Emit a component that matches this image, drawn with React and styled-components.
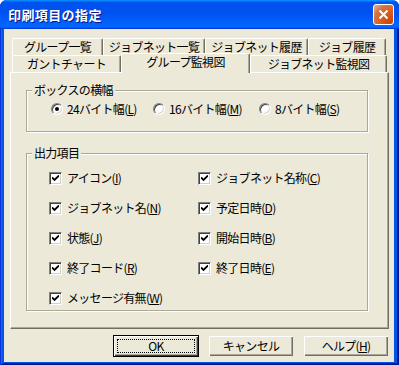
import styled, { createGlobalStyle } from "styled-components";

const Global = createGlobalStyle`
  html, body { margin: 0; padding: 0; background: #fff; }
  #root { width: 399px; height: 365px; }
`;

const Frame = styled.div`
  width: 399px;
  height: 365px;
  box-sizing: border-box;
  display: flex;
  flex-direction: column;
  background: #0054e3;
  border-radius: 7px 7px 0 0;
  box-shadow: inset 1px 0 #0831d9, inset -1px -1px #00138c, inset 2px 0 #166aee, inset -2px -2px #001ea0;
  overflow: hidden;
  font-family: "Noto Sans CJK JP", "Noto Sans", sans-serif;
  font-size: 12px;
  line-height: 14px;
  letter-spacing: -0.7px;
  color: #000;
`;

const TitleBar = styled.div`
  height: 29px;
  flex: none;
  display: flex;
  align-items: center;
  justify-content: space-between;
  padding: 0 5px 0 8px;
  background: linear-gradient(180deg, #0997ff, #0053ee 8%, #0050ee 40%, #0066ff 88%, #0066ff 93%, #005bff 95%, #003dd7 96%, #003dd7);
`;

const Title = styled.span`
  color: #fff;
  font-weight: bold;
  font-size: 13px;
  letter-spacing: 0.4px;
  text-shadow: 1px 1px #0f1089;
`;

const CloseButton = styled.div`
  width: 21px;
  height: 21px;
  box-sizing: border-box;
  border: 1px solid #fff;
  border-radius: 3px;
  background: radial-gradient(circle at 90% 90%, #cc4600 0%, #dc6527 55%, #cd7546 70%, #e5a07e 90%);
  display: flex;
  align-items: center;
  justify-content: center;
`;

const Client = styled.div`
  flex: 1;
  margin: 0 5px 3px 4px;
  background: #ece9d8;
  display: flex;
  flex-direction: column;
  padding: 9px 5px 0 6px;
`;

const TabRow = styled.div`
  display: flex;
  height: 17px;
  padding-left: 2px;
  position: relative;
  z-index: ${(p) => p.$z};
`;

const Tab = styled.div`
  width: ${(p) => p.$w}px;
  box-sizing: border-box;
  height: ${(p) => (p.$active ? 20 : 17)}px;
  margin-top: ${(p) => (p.$active ? -2 : 0)}px;
  display: flex;
  align-items: center;
  justify-content: center;
  padding-bottom: ${(p) => (p.$active ? 3 : 0)}px;
  background: #ece9d8;
  border-top: 1px solid #fff;
  border-left: 1px solid #fff;
  border-right: 1px solid #716f64;
  border-radius: 2px 2px 0 0;
  box-shadow: inset -1px 0 #aca899;
  position: relative;
  z-index: ${(p) => (p.$active ? 2 : 0)};
`;

const Panel = styled.div`
  height: 257px;
  box-sizing: border-box;
  border-top: 1px solid #fff;
  border-left: 1px solid #fff;
  border-right: 1px solid #716f64;
  border-bottom: 1px solid #716f64;
  box-shadow: inset -1px -1px #aca899;
  padding: 10px 0 0 15px;
  display: flex;
  flex-direction: column;
  gap: 14px;
`;

const Group = styled.fieldset`
  width: 342px;
  box-sizing: border-box;
  margin: 0;
  padding: 0;
  min-width: 0;
  border: 1px solid #aca899;
  box-shadow: inset 1px 1px #fff, 1px 1px #fff;
`;

const Legend = styled.legend`
  padding: 0 2px;
  margin-left: 5px;
  background: #ece9d8;
  line-height: 14px;
`;

const RadioRow = styled.div`
  display: flex;
  padding: 5px 0 15px 24px;
`;

const RadioItem = styled.label`
  width: ${(p) => p.$w}px;
  display: flex;
  align-items: center;
  gap: 4px;
`;

const RadioCircle = styled.span`
  width: 12px;
  height: 12px;
  box-sizing: border-box;
  border-radius: 50%;
  background: #fff;
  border: 1px solid;
  border-color: #808080 #fff #fff #808080;
  box-shadow: inset 1px 1px #404040, inset -1px -1px #d4d0c8;
  display: flex;
  align-items: center;
  justify-content: center;
  flex: none;
`;

const Dot = styled.span`
  width: 4px;
  height: 4px;
  border-radius: 50%;
  background: #000;
`;

const CheckGrid = styled.div`
  display: grid;
  grid-template-columns: 149px 1fr;
  row-gap: 16px;
  padding: 11px 0 5px 22px;
`;

const CheckItem = styled.label`
  display: flex;
  align-items: center;
  gap: 5px;
  height: 14px;
`;

const CheckBox = styled.span`
  width: 13px;
  height: 13px;
  box-sizing: border-box;
  background: #fff;
  border: 1px solid;
  border-color: #808080 #fff #fff #808080;
  box-shadow: inset 1px 1px #404040, inset -1px -1px #d4d0c8;
  display: flex;
  align-items: center;
  justify-content: center;
  flex: none;
`;

const ButtonRow = styled.div`
  display: flex;
  justify-content: flex-end;
  gap: 9px;
  margin-top: 6px;
`;

const Button = styled.div`
  width: 86px;
  height: 22px;
  box-sizing: border-box;
  display: flex;
  align-items: center;
  justify-content: center;
  background: #ece9d8;
  border: 1px solid ${(p) => (p.$default ? "#000" : "transparent")};
  box-shadow: ${(p) =>
    p.$default
      ? "inset 1px 1px #fff, inset -1px -1px #404040, inset -2px -2px #aca899"
      : "inset 1px 1px #fff, inset -1px -1px #716f64, inset -2px -2px #aca899"};
  position: relative;
`;

const Focus = styled.span`
  position: absolute;
  inset: 3px;
  border: 1px dotted #000;
`;

const u = (k) => <u>{k}</u>;

const tabsTop = [
  ["グループ一覧", 91],
  ["ジョブネット一覧", 102],
  ["ジョブネット履歴", 103],
  ["ジョブ履歴", 78],
];

const checks = [
  ["アイコン", "I"],
  ["ジョブネット名称", "C"],
  ["ジョブネット名", "N"],
  ["予定日時", "D"],
  ["状態", "J"],
  ["開始日時", "B"],
  ["終了コード", "R"],
  ["終了日時", "E"],
  ["メッセージ有無", "W"],
];

const radios = [
  ["24バイト幅", "L", 102, true],
  ["16バイト幅", "M", 106, false],
  ["8バイト幅", "S", 100, false],
];

function Check() {
  return (
    <svg width="7" height="7" viewBox="0 0 7 7">
      <path d="M0 2.5 L2.5 5 L7 0.5" stroke="#000" strokeWidth="1.8" fill="none" />
    </svg>
  );
}

export default function App() {
  return (
    <>
      <Global />
      <Frame>
        <TitleBar>
          <Title>印刷項目の指定</Title>
          <CloseButton>
            <svg width="11" height="11" viewBox="0 0 11 11">
              <path d="M1.5 1.5 L9.5 9.5 M9.5 1.5 L1.5 9.5" stroke="#fff" strokeWidth="2" />
            </svg>
          </CloseButton>
        </TitleBar>
        <Client>
          <TabRow $z={0}>
            {tabsTop.map(([t, w]) => (
              <Tab key={t} $w={w}>{t}</Tab>
            ))}
          </TabRow>
          <TabRow $z={1}>
            <Tab $w={109}>ガントチャート</Tab>
            <Tab $w={129} $active>グループ監視図</Tab>
            <Tab $w={137}>ジョブネット監視図</Tab>
          </TabRow>
          <Panel>
            <Group>
              <Legend>ボックスの横幅</Legend>
              <RadioRow>
                {radios.map(([t, k, w, on]) => (
                  <RadioItem key={k} $w={w}>
                    <RadioCircle>{on && <Dot />}</RadioCircle>
                    <span>{t}({u(k)})</span>
                  </RadioItem>
                ))}
              </RadioRow>
            </Group>
            <Group>
              <Legend>出力項目</Legend>
              <CheckGrid>
                {checks.map(([t, k]) => (
                  <CheckItem key={k}>
                    <CheckBox><Check /></CheckBox>
                    <span>{t}({u(k)})</span>
                  </CheckItem>
                ))}
              </CheckGrid>
            </Group>
          </Panel>
          <ButtonRow>
            <Button $default>OK<Focus /></Button>
            <Button>キャンセル</Button>
            <Button>ヘルプ({u("H")})</Button>
          </ButtonRow>
        </Client>
      </Frame>
    </>
  );
}
